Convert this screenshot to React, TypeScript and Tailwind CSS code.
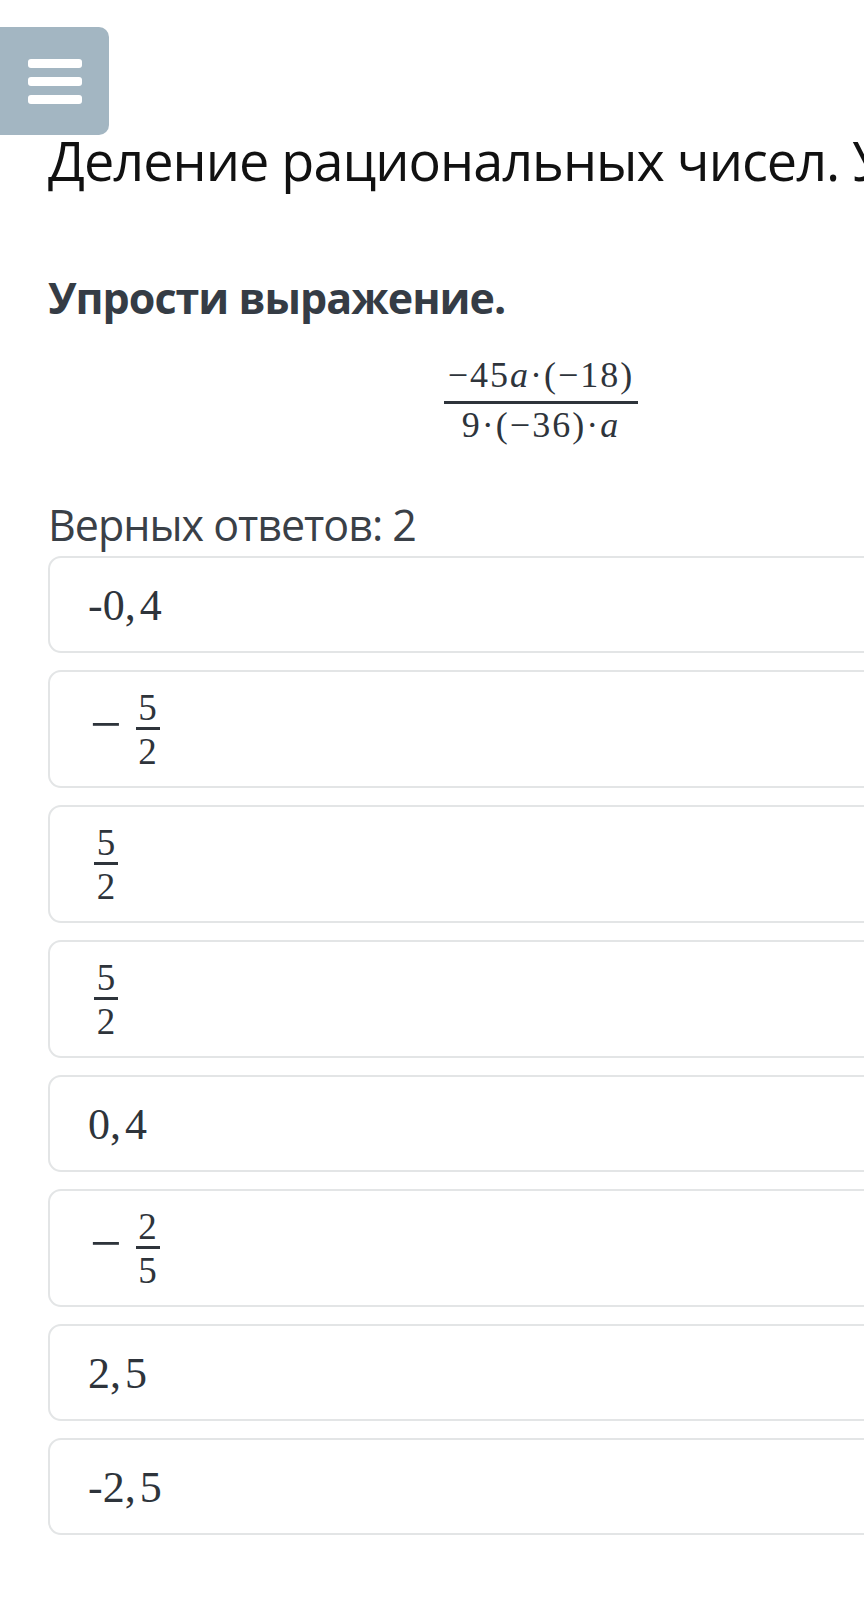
const answers: Array<
  | { kind: "text"; int: string; dec: string }
  | { kind: "frac"; neg: boolean; num: string; den: string }
> = [
  { kind: "text", int: "-0,", dec: "4" },
  { kind: "frac", neg: true, num: "5", den: "2" },
  { kind: "frac", neg: false, num: "5", den: "2" },
  { kind: "frac", neg: false, num: "5", den: "2" },
  { kind: "text", int: "0,", dec: "4" },
  { kind: "frac", neg: true, num: "2", den: "5" },
  { kind: "text", int: "2,", dec: "5" },
  { kind: "text", int: "-2,", dec: "5" },
];

function Fraction({ num, den }: { num: string; den: string }) {
  return (
    <span className="inline-flex flex-col items-center font-['Liberation_Serif',serif] text-[37px] leading-[37px] text-[#2e343b]">
      <span>{num}</span>
      <span className="mt-px h-[3px] w-[24px] bg-[#2e343b]" />
      <span className="mt-[3px]">{den}</span>
    </span>
  );
}

export default function App() {
  return (
    <div className="relative h-[1605px] w-[864px] overflow-hidden bg-white">
      {/* кнопка меню */}
      <div className="mt-[27px] flex h-[108px] w-[109px] flex-col items-center justify-center gap-[9px] rounded-r-[10px] bg-[#a3b6c2]">
        <span className="h-[9px] w-[54px] rounded-[3px] bg-white" />
        <span className="h-[9px] w-[54px] rounded-[3px] bg-white" />
        <span className="h-[9px] w-[54px] rounded-[3px] bg-white" />
      </div>

      <h1 className="-mt-[2px] ml-[48px] whitespace-nowrap font-['Open_Sans',sans-serif] text-[54px] leading-[54px] font-normal tracking-[-1px] text-[#111]">
        Деление рациональных чисел. Урок 3
      </h1>

      <div className="ml-[48px] w-[986px]">
        <p className="mt-[88px] font-['Open_Sans',sans-serif] text-[43px] leading-[45px] font-bold tracking-[-1px] text-[#353c45]">
          Упрости выражение.
        </p>

        {/* формула */}
        <div className="mt-[37px] flex justify-center">
          <div className="inline-flex flex-col items-center font-['Liberation_Serif',serif] text-[36px] leading-[36px] tracking-[2px] text-[#2e343b]">
            <span>
              −45<i>a</i>·(−18)
            </span>
            <span className="mt-[8px] h-[3px] w-[194px] bg-[#2e343b]" />
            <span className="mt-[3px]">
              9·(−36)·<i>a</i>
            </span>
          </div>
        </div>

        <p className="mt-[59px] font-['Open_Sans',sans-serif] text-[43px] leading-[45px] tracking-[-1px] text-[#3a4047]">
          Верных ответов: 2
        </p>

        <div className="mt-[9px] flex flex-col gap-[17px]">
          {answers.map((a, i) => (
            <div
              key={i}
              className={`flex items-center rounded-[13px] border-2 border-[#e3e5e6] bg-white pl-[42px] ${
                a.kind === "text" ? "h-[97px]" : "h-[118px]"
              }`}
            >
              {a.kind === "text" ? (
                <span className="-ml-[4px] pt-[3px] font-['Liberation_Serif',serif] text-[44px] leading-[44px] text-[#2e343b]">
                  {a.int}
                  <span className="ml-[4px]">{a.dec}</span>
                </span>
              ) : (
                <span className="flex items-center">
                  {a.neg && (
                    <span className="-ml-[2px] mr-[14px] mb-[10px] font-['Liberation_Serif',serif] text-[56px] leading-[56px] text-[#2e343b]">
                      −
                    </span>
                  )}
                  <span className={a.neg ? "" : "ml-[2px]"}>
                    <Fraction num={a.num} den={a.den} />
                  </span>
                </span>
              )}
            </div>
          ))}
        </div>
      </div>
    </div>
  );
}
